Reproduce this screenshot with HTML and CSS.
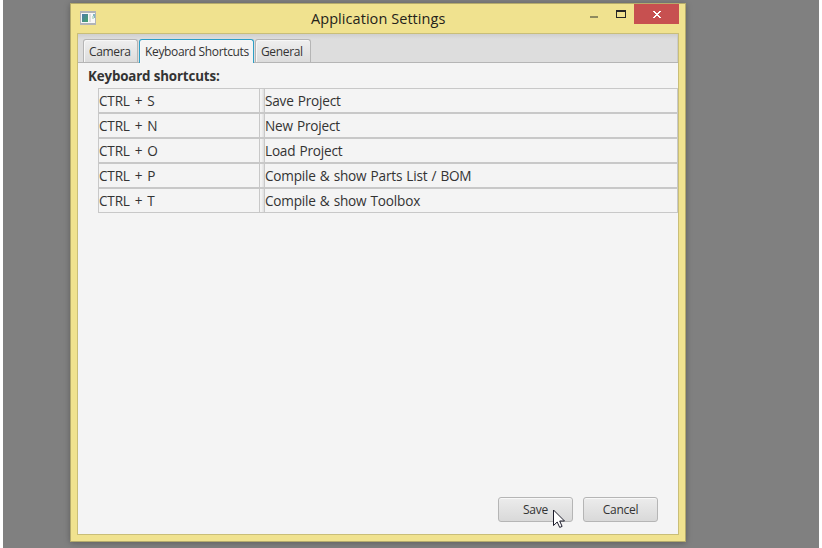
FILE: index.html
```
<!DOCTYPE html>
<html lang="en">
<head>
<meta charset="utf-8">
<title>Application Settings</title>
<link rel="stylesheet" href="styles.css">
</head>
<body>
<main class="desktop">
  <section class="window">
    <header class="titlebar">
      <svg class="app-icon" width="16" height="14" viewBox="0 0 16 14">
        <defs><linearGradient id="g" x1="0" y1="0" x2="1" y2="1"><stop offset="0" stop-color="#4d79ad"/><stop offset="1" stop-color="#42a568"/></linearGradient></defs>
        <path fill="#b0b4b8" d="M0 0h16v14H0z"/><path fill="#f8f8f8" d="M1 2h14v10H1z"/>
        <path fill="url(#g)" d="M2 3h6v8H2z"/><path fill="#dedede" d="M9 3h2v8H9z"/><path fill="#82b6c0" d="M13 3h2v4h-2z"/><path fill="#c5e0ce" d="M12 5h2v3h-2z"/>
      </svg>
      <h1 class="title">Application Settings</h1>
      <div class="controls">
        <svg class="ctl" width="50" height="20" viewBox="0 0 50 20" shape-rendering="crispEdges">
          <path fill="#8f8a5e" d="M6 12h8v2H6z"/><path fill="#262626" fill-rule="evenodd" d="M32 6h10v8H32zM33 8v5h8V8z"/>
        </svg>
        <svg class="close" width="45" height="20" viewBox="0 0 45 20" shape-rendering="crispEdges">
          <path fill="#fff" d="M19 7h2v1h1v1h2V8h1V7h2v1h-1v1h-1v1h-1v1h1v1h1v1h1v1h-2v-1h-1v-1h-2v1h-1v1h-2v-1h1v-1h1v-1h1v-1h-1V9h-1V8h-1z"/>
        </svg>
      </div>
    </header>
    <div class="content">
      <nav class="tabs">
        <span class="tab camera">Camera</span>
        <span class="tab active">Keyboard Shortcuts</span>
        <span class="tab general">General</span>
      </nav>
      <h2 class="heading">Keyboard shortcuts:</h2>
      <div class="table">
        <div class="row"><span class="key">CTRL + S</span><span class="gap"></span><span class="action">Save Project</span></div>
        <div class="row"><span class="key">CTRL + N</span><span class="gap"></span><span class="action">New Project</span></div>
        <div class="row"><span class="key">CTRL + O</span><span class="gap"></span><span class="action">Load Project</span></div>
        <div class="row"><span class="key">CTRL + P</span><span class="gap"></span><span class="action">Compile &amp; show Parts List / BOM</span></div>
        <div class="row"><span class="key">CTRL + T</span><span class="gap"></span><span class="action">Compile &amp; show Toolbox</span></div>
      </div>
      <footer class="buttons">
        <button class="button">Save
          <svg class="cursor" width="13" height="20" viewBox="0 0 13 20"><path fill="#fff" stroke="#1c1c2b" d="M.5 1v15.5L4.2 13l2.5 5.4 2.4-1L6.7 12h4.8z"/></svg>
        </button>
        <button class="button">Cancel</button>
      </footer>
    </div>
  </section>
</main>
</body>
</html>
```
FILE: styles.css
```
* { box-sizing: border-box; }
body {
  margin: 0;
  padding: 0 3px;
  background: #fff;
  color: #333;
  font-family: "Open Sans", "Noto Sans", sans-serif;
}
.desktop {
  height: 548px;
  padding: 3px 133px 0 67px;
  background: #808080;
  overflow: hidden;
}
.window {
  display: flex;
  flex-direction: column;
  height: 539px;
  padding: 0 6px 6px;
  background: #f0e28f;
  border: 1px solid #b4aa6c;
  box-shadow: 0 1px 6px rgba(0, 0, 0, .28);
}
.titlebar {
  display: flex;
  height: 29px;
  flex: none;
}
.app-icon { margin: 7px 0 0 3px; }
.title {
  flex: 1;
  margin: 0 0 0 2px;
  padding-left: 213px;
  font-size: 14.5px;
  line-height: 30px;
  font-weight: 400;
  letter-spacing: .06px;
  white-space: nowrap;
  color: #24221a;
}
.controls { display: flex; }
.close { background: #c75050; }
.content {
  flex: 1;
  display: flex;
  flex-direction: column;
  border: 1px solid #c9be78;
  background: #f4f4f4;
}
.tabs {
  display: flex;
  align-items: flex-end;
  gap: 1px;
  height: 29px;
  padding-left: 5px;
  border-bottom: 1px solid #b5b5b5;
  background: linear-gradient(#cfcfcf, #ddd 5px);
  box-shadow: inset -1px 0 #cbcbcb;
}
.tab {
  height: 23px;
  padding-left: 5px;
  border: 1px solid #b5b5b5;
  border-bottom: 0;
  border-radius: 3px 3px 0 0;
  background: linear-gradient(#efefef, #dcdcdc);
  box-shadow: inset 1px 1px #f7f7f7;
  font-size: 12px;
  line-height: 24px;
  letter-spacing: -.35px;
  white-space: nowrap;
}
.camera { width: 55px; }
.active {
  width: 115px;
  height: 24px;
  margin-bottom: -1px;
  border-color: #2e9fc6;
  background: #f4f4f4;
}
.general { width: 56px; }
.heading {
  margin: 0 0 0 10px;
  height: 25px;
  font-size: 13.33px;
  line-height: 27px;
  font-weight: 700;
  letter-spacing: -.14px;
}
.table { margin-left: 20px; }
.row {
  display: flex;
  height: 25px;
  border: 1px solid #c8c8c8;
  font-size: 13.6px;
  line-height: 24px;
  letter-spacing: -.2px;
  word-spacing: .8px;
  white-space: nowrap;
}
.key {
  width: 160px;
  word-spacing: 1.7px;
}
.gap {
  width: 6px;
  border-left: 1px solid #c8c8c8;
  border-right: 1px solid #c8c8c8;
  background: linear-gradient(90deg, #f4f4f4 30%, #dedede);
}
.action { flex: 1; }
.buttons {
  display: flex;
  justify-content: flex-end;
  gap: 10px;
  margin: auto 20px 12px 0;
}
.button {
  position: relative;
  width: 75px;
  height: 25px;
  padding: 0;
  border: 1px solid #b5b5b5;
  border-radius: 3px;
  background: linear-gradient(#ececec, #d9d9d9);
  box-shadow: inset 0 1px #f8f8f8;
  color: #333;
  font: 12px/23px "Open Sans", "Noto Sans", sans-serif;
  letter-spacing: -.25px;
}
.cursor {
  position: absolute;
  left: 54px;
  top: 11px;
}
```
